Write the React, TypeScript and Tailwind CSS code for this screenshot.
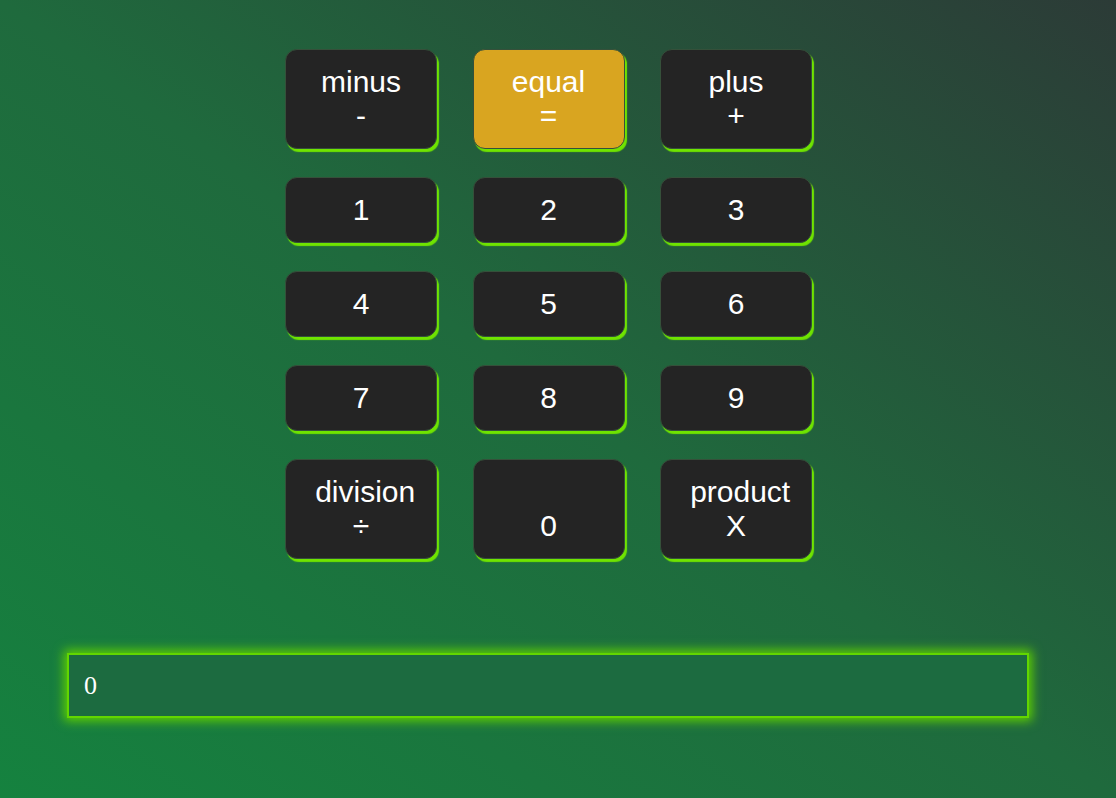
type Key = { top: string; bottom?: string; gold?: boolean };

const rows: Key[][] = [
  [
    { top: 'minus', bottom: '-' },
    { top: 'equal', bottom: '=', gold: true },
    { top: 'plus', bottom: '+' },
  ],
  [{ top: '1' }, { top: '2' }, { top: '3' }],
  [{ top: '4' }, { top: '5' }, { top: '6' }],
  [{ top: '7' }, { top: '8' }, { top: '9' }],
  [
    { top: '\u00a0division', bottom: '÷' },
    { top: '\u00a0', bottom: '0' },
    { top: '\u00a0product', bottom: 'X' },
  ],
];

const CalcKey = ({ k }: { k: Key }) => (
  <button
    className={`w-[152px] rounded-[12px] border border-[#35503a] py-[15px] text-[30px] leading-[34px] text-white shadow-[2px_3px_1px_#6fe400] ${
      k.gold ? 'bg-[#d9a520]' : 'bg-[#242424]'
    }`}
    style={{ fontFamily: '"Liberation Sans", Arial, sans-serif' }}
  >
    <div>{k.top}</div>
    {k.bottom && <div>{k.bottom}</div>}
  </button>
);

export default function App() {
  return (
    <div className="min-h-[798px] w-full bg-[linear-gradient(to_top_right,#15823f,#1f6a3d_50%,#2c3b37)] pt-[49px]">
      <div className="ml-[285px] flex w-[528px] flex-col gap-[28px]">
        {rows.map((row, i) => (
          <div key={i} className="flex gap-[35.5px]">
            {row.map((k, j) => (
              <CalcKey key={j} k={k} />
            ))}
          </div>
        ))}
      </div>

      <div className="mx-[67px] mt-[94px] w-[962px] border-2 border-[#62d600] bg-[#1c6b40] px-[15px] py-[14px] shadow-[0_0_10px_3px_#5fd000]">
        <div
          className="text-[26px] leading-[33px] text-white"
          style={{ fontFamily: '"Liberation Serif", "Times New Roman", serif' }}
        >
          0
        </div>
      </div>
    </div>
  );
}
